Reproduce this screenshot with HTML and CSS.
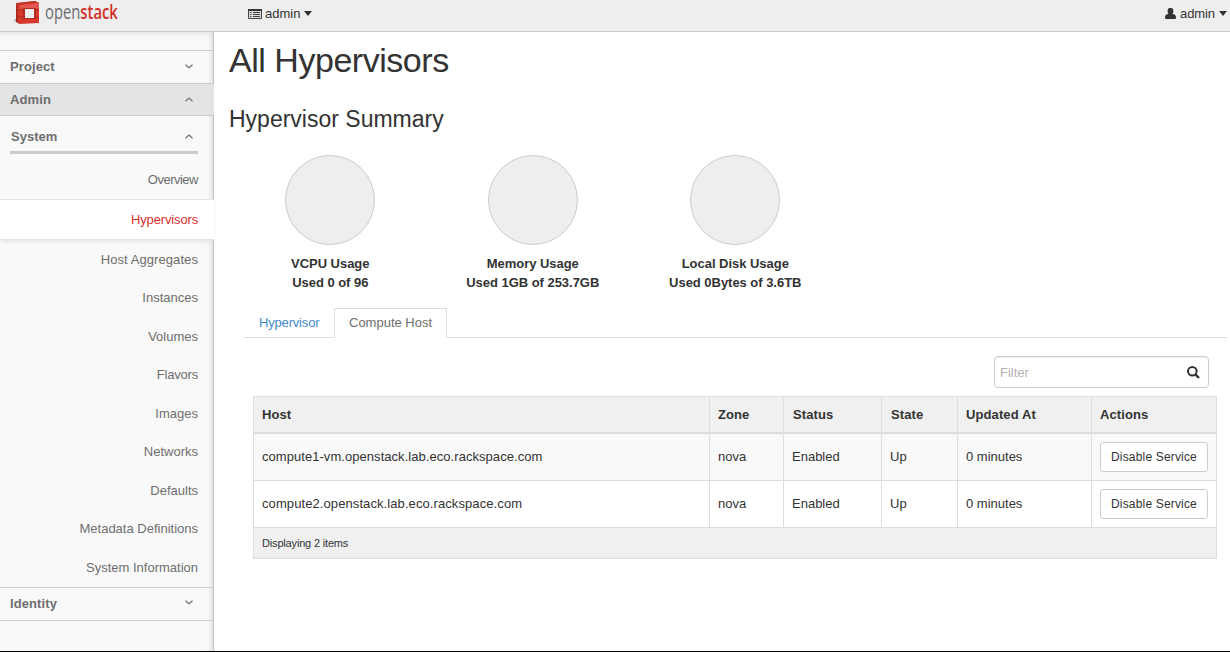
FILE: index.html
```html
<!DOCTYPE html>
<html lang="en">
<head>
<meta charset="utf-8">
<title>All Hypervisors</title>
<link rel="stylesheet" href="styles.css">
</head>
<body>
<header class="topbar">
  <a class="brand">
    <svg class="brand-mark" width="27" height="25" viewBox="0 0 27 25">
      <path d="M0 21l6-5v7z" fill="#999" opacity=".6"/>
      <path d="M3 3l4 1v20l-4-2z" fill="#a8281f"/>
      <path d="M4 3L22 1l4 2v20L7 24l-2-2z" fill="#d8392d"/>
      <path d="M4 3L22 1l4 2L7 5z" fill="#c23328"/>
      <path d="M7 5l19-2v5L7 9z" fill="#e4574c"/>
      <path d="M10 8h13v11H10z" fill="#b52a20"/>
      <path d="M12 9h9v9h-9z" fill="#eee"/>
      <path d="M3 10h7M22 10h4M3 17h7M22 17h4" stroke="#a8281f" fill="none"/>
    </svg>
    <span class="brand-name">open<b>stack</b></span>
  </a>
  <div class="project-menu">
    <svg width="14" height="12" viewBox="0 0 14 12"><path d="M.5 1.500h13v9H.5z" fill="#ddd" stroke="#444"/><path d="M0 1h14v2H0z" fill="#333"/><path d="M2 4.500h1.500M5 4.500h7M2 6.500h1.500M5 6.500h7M2 8.500h1.500M5 8.500h7" stroke="#444"/></svg>
    <span>admin</span><i class="caret"></i>
  </div>
  <div class="user-menu">
    <svg width="11" height="11" viewBox="0 0 11 11"><path d="M5.500 0a2.700 3 0 012.700 3c0 1.600-.8 2.600-1.200 3C9.800 5.800 11 7.300 11 9.500c0 1-.6 1.500-1.500 1.500h-8C.6 11 0 10.500 0 9.500 0 7.300 1.200 5.800 4 6 3.600 5.600 2.800 4.600 2.800 3A2.700 3 0 015.500 0z" fill="#333"/><ellipse cx="5.500" cy="3.200" rx="2.800" ry="3.200" fill="#333"/></svg>
    <span>admin</span><i class="caret"></i>
  </div>
</header>
<div class="page">
  <nav class="sidebar">
    <div class="section project">Project<svg class="chev" width="8" height="5" viewBox="0 0 8 5"><path d="M.5 .7L4 3.700 7.500 .7"/></svg></div>
    <div class="section admin">Admin<svg class="chev" width="8" height="5" viewBox="0 0 8 5"><path d="M.5 4.300L4 1l3.500 3.300"/></svg></div>
    <div class="group">System<svg class="chev" width="8" height="5" viewBox="0 0 8 5"><path d="M.5 4.300L4 1l3.500 3.300"/></svg></div>
    <a class="item overview">Overview</a>
    <a class="item active">Hypervisors</a>
    <a class="item aggregates">Host Aggregates</a>
    <a class="item">Instances</a>
    <a class="item">Volumes</a>
    <a class="item flavors">Flavors</a>
    <a class="item">Images</a>
    <a class="item">Networks</a>
    <a class="item">Defaults</a>
    <a class="item">Metadata Definitions</a>
    <a class="item">System Information</a>
    <div class="section identity">Identity<svg class="chev" width="8" height="5" viewBox="0 0 8 5"><path d="M.5 .7L4 3.700 7.500 .7"/></svg></div>
  </nav>
  <main class="content">
    <h1>All Hypervisors</h1>
    <h2>Hypervisor Summary</h2>
    <div class="charts">
      <div class="chart"><div class="pie"></div><span>VCPU Usage</span><span>Used 0 of 96</span></div>
      <div class="chart"><div class="pie"></div><span>Memory Usage</span><span>Used 1GB of 253.7GB</span></div>
      <div class="chart"><div class="pie"></div><span>Local Disk Usage</span><span>Used 0Bytes of 3.6TB</span></div>
    </div>
    <div class="tabs"><a class="tab link">Hypervisor</a><a class="tab current">Compute Host</a></div>
    <div class="filter"><span>Filter</span>
      <svg width="13" height="13" viewBox="0 0 13 13"><circle cx="5.300" cy="5.300" r="4.300" fill="none" stroke="#333" stroke-width="2"/><path d="M8.300 8.300l3.700 3.700" stroke="#333" stroke-width="2.400"/></svg>
    </div>
    <table class="hosts">
      <colgroup><col class="c1"><col class="c2"><col class="c3"><col class="c4"><col class="c5"><col class="c6"></colgroup>
      <thead><tr><th>Host</th><th>Zone</th><th class="inset">Status</th><th class="inset">State</th><th>Updated At</th><th>Actions</th></tr></thead>
      <tbody>
        <tr class="odd"><td class="host">compute1-vm.openstack.lab.eco.rackspace.com</td><td>nova</td><td>Enabled</td><td>Up</td><td>0 minutes</td><td><button>Disable Service</button></td></tr>
        <tr><td class="host wide">compute2.openstack.lab.eco.rackspace.com</td><td>nova</td><td>Enabled</td><td>Up</td><td>0 minutes</td><td><button>Disable Service</button></td></tr>
      </tbody>
      <tfoot><tr><td colspan="6">Displaying 2 items</td></tr></tfoot>
    </table>
  </main>
</div>
</body>
</html>
```
FILE: styles.css
```css
* { box-sizing: border-box; }
body {
  margin: 0;
  height: 652px;
  overflow: hidden;
  display: flex;
  flex-direction: column;
  border-bottom: 1px solid #000;
  font: 13px/18px "Liberation Sans", Arial, sans-serif;
  color: #333;
  background: #fff;
}
svg { display: block; flex: none; }
.topbar {
  flex: none;
  display: flex;
  height: 32px;
  background: #eee;
  border-bottom: 1px solid #ccc;
}
.brand { display: flex; width: 248px; padding-left: 13px; }
.brand-name {
  margin-left: 5px;
  font: 20px/24px "Open Sans", sans-serif;
  color: #6b6c6e;
  transform: scaleX(.74);
  transform-origin: 0 0;
}
.brand-name b { font-weight: 600; color: #d22f27; }
.project-menu, .user-menu { display: flex; align-items: center; height: 27px; }
.project-menu span { margin-left: 3px; }
.user-menu { margin-left: auto; padding-right: 3px; }
.user-menu span { margin-left: 4px; letter-spacing: -.1px; }
.caret {
  margin-left: 4px;
  border: 4px solid transparent;
  border-top: 5px solid #333;
  border-bottom: 0;
}
.page { flex: 1; display: flex; min-height: 0; }
.sidebar {
  width: 214px;
  padding-top: 18px;
  background: #f9f9f9;
  border-right: 1px solid #c0c0c0;
  box-shadow: inset -5px 0 5px -3px #ddd, inset 0 4px 4px -3px #ddd;
  color: #6e6e6e;
}
.section, .group { display: flex; justify-content: space-between; align-items: center; font-weight: bold; }
.section { height: 33px; padding: 0 20px 0 10px; border-top: 1px solid #ccc; letter-spacing: .1px; }
.section .chev { margin-bottom: 2px; }
.section.admin {
  margin-right: -1px;
  padding-right: 21px;
  background: #e3e4e6;
  border-bottom: 1px solid #ccc;
}
.section.admin .chev { margin-bottom: 0; }
.chev path { fill: none; stroke: #6e6e6e; stroke-width: 1.2; }
.group {
  height: 39px;
  margin: -1px 15px 7px 10px;
  padding: 7px 5px 0 1px;
  border-bottom: 3px solid #ccc;
}
.item { display: flex; justify-content: flex-end; align-items: center; height: 38.5px; padding-right: 15px; }
.item.overview { height: 38px; letter-spacing: -.5px; }
.item.aggregates { height: 39px; padding-top: 1px; letter-spacing: .08px; }
.item.flavors { letter-spacing: -.2px; }
.item.active {
  height: 41px;
  margin-right: -1px;
  padding-right: 16px;
  background: #fff;
  border-top: 1px solid #e5e5e5;
  border-bottom: 1px solid #e5e5e5;
  box-shadow: 0 2px 4px -1px #ddd;
  color: #d9302c;
  letter-spacing: -.15px;
}
.section.identity { height: 34px; margin-top: -.5px; border-bottom: 1px solid #ccc; }
.content { flex: 1; padding: 8px 3px 0 15px; }
h1, h2 { margin: 0; font-weight: normal; }
h1 { font-size: 34px; line-height: 40px; letter-spacing: -.47px; }
h2 { margin-top: 25px; font-size: 23px; line-height: 28px; }
.charts { display: flex; margin-top: 22px; }
.chart { display: flex; flex-direction: column; align-items: center; width: 202.5px; font-weight: bold; line-height: 19px; letter-spacing: -.03px; }
.pie { width: 90px; height: 90px; margin-bottom: 9px; border: 1px solid #ccc; border-radius: 50%; background: #eee; }
.tabs { display: flex; height: 30px; margin: 16px 0 18px 15px; border-bottom: 1px solid #ddd; }
.tab { height: 30px; padding: 6px 15px 0; color: #428bca; white-space: nowrap; }
.tab.link { width: 90px; letter-spacing: -.18px; }
.tab.current { width: 113px; padding: 5px 14px 0; border: 1px solid #ddd; border-bottom-color: #fff; color: #6e6e6e; background: #fff; }
.filter {
  display: flex;
  align-items: center;
  justify-content: space-between;
  width: 215px;
  height: 32px;
  margin: 0 18px 8px auto;
  padding: 1px 8px 0 5px;
  border: 1px solid #ccc;
  border-radius: 4px;
  box-shadow: inset 0 1px 1px #eee;
  color: #b3b3b3;
}
.hosts { width: 964px; margin-left: 24px; table-layout: fixed; border-collapse: collapse; }
.c1 { width: 456px; }
.c2 { width: 74px; }
.c3 { width: 98px; }
.c4 { width: 76px; }
.c5 { width: 134px; }
.c6 { width: 125px; }
.hosts th, .hosts td { padding: 0 8px; border: 1px solid #ddd; text-align: left; white-space: nowrap; }
.hosts th { height: 36px; padding-top: 1px; background: #f0f0f0; border-bottom-width: 2px; letter-spacing: .1px; }
.hosts th.inset { padding-left: 9px; }
.hosts tbody td { height: 47px; }
.hosts tbody .odd td { height: 48px; }
.hosts tbody .host { letter-spacing: .05px; }
.hosts tbody .wide { letter-spacing: .09px; }
.odd { background: #f9f9f9; }
.hosts tfoot td { height: 31px; padding-bottom: 1px; background: #f0f0f0; font-size: 11px; letter-spacing: -.17px; }
button {
  display: block;
  width: 108px;
  height: 30px;
  padding: 0;
  border: 1px solid #ccc;
  border-radius: 3px;
  background: #fff;
  color: #333;
  font: 12px/18px "Liberation Sans", Arial, sans-serif;
  letter-spacing: .17px;
}
```
